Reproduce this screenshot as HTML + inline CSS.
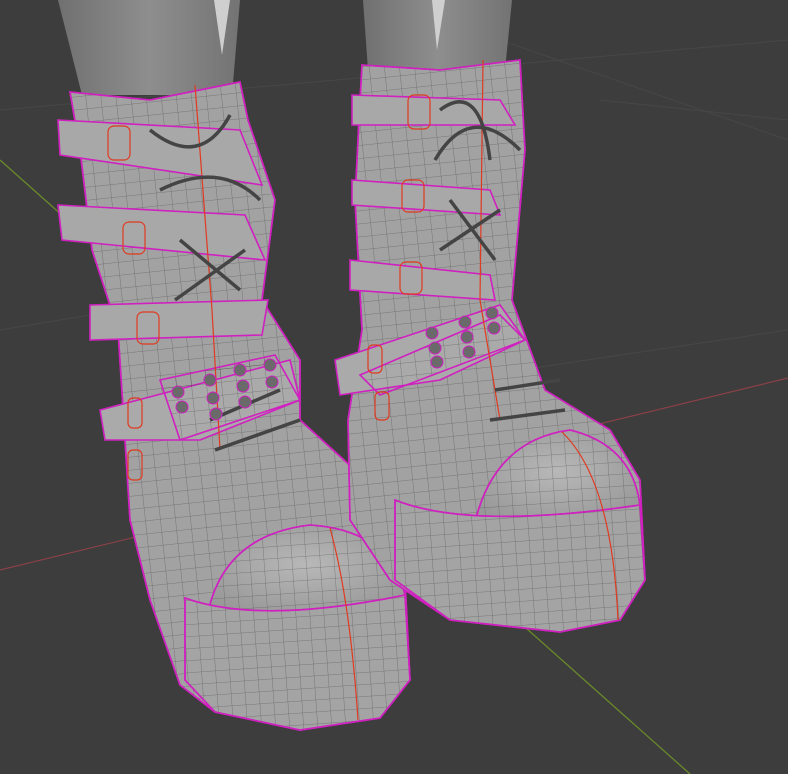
<!DOCTYPE html>
<html><head><meta charset="utf-8"><style>
html,body{margin:0;padding:0;background:#3d3d3d;width:788px;height:774px;overflow:hidden}
svg{display:block}
</style></head><body>
<svg width="788" height="774" viewBox="0 0 788 774" xmlns="http://www.w3.org/2000/svg">
<defs>
<pattern id="mesh" width="15" height="13" patternUnits="userSpaceOnUse" patternTransform="rotate(-6)">
<path d="M0 0H15M0 0V13" stroke="#3a3a3a" stroke-width="0.8" fill="none" opacity="0.55"/>
</pattern>
<pattern id="meshf" width="14" height="12" patternUnits="userSpaceOnUse" patternTransform="rotate(-4)">
<path d="M0 0H14M0 0V12" stroke="#3a3a3a" stroke-width="0.8" fill="none" opacity="0.55"/>
</pattern>
<radialGradient id="toe" cx="0.5" cy="0.45" r="0.6"><stop offset="0" stop-color="#b8b8b8"/><stop offset="1" stop-color="#999"/></radialGradient>
<linearGradient id="leg" x1="0" x2="1"><stop offset="0" stop-color="#707070"/><stop offset="0.5" stop-color="#8e8e8e"/><stop offset="1" stop-color="#737373"/></linearGradient>
</defs>
<rect width="788" height="774" fill="#3d3d3d"/>
<g stroke="#474747" stroke-width="1" fill="none">
<path d="M0 110L560 60L788 40"/><path d="M500 40L788 140"/><path d="M600 100L788 120"/><path d="M0 330L120 310"/><path d="M520 370L788 330"/>
</g>
<path d="M0 160L690 774" stroke="#6a8a2a" stroke-width="1.3"/>
<path d="M0 570L788 378" stroke="#8a4048" stroke-width="1.2"/>
<path d="M58 0H240L232 95H82Z" fill="url(#leg)"/>
<path d="M214 0L222 55L230 0Z" fill="#cfcfcf"/>
<path d="M363 0H512L505 70H368Z" fill="url(#leg)"/>
<path d="M432 0L437 50L445 0Z" fill="#cfcfcf"/>
<!-- LEFT BOOT -->
<g stroke="#d020c0" stroke-width="1.6">
<path d="M70 92L150 100L240 82L248 120L275 200L262 300L300 360L300 420L355 470L395 540L405 580L410 680L380 718L300 730L215 712L180 685L150 600L130 520L125 440L118 330L92 250L80 150Z" fill="#a2a2a2"/>
<path d="M70 92L150 100L240 82L248 120L275 200L262 300L300 360L300 420L355 470L395 540L405 580L410 680L380 718L300 730L215 712L180 685L150 600L130 520L125 440L118 330L92 250L80 150Z" fill="url(#mesh)"/>
<path d="M208 612Q225 535 310 525Q390 530 405 595Q330 620 208 612Z" fill="url(#toe)"/>
<path d="M208 612Q225 535 310 525Q390 530 405 595Q330 620 208 612Z" fill="url(#meshf)"/>
<path d="M185 598Q260 625 405 595L410 680L380 718L300 730L215 712L185 680Z" fill="#a4a4a4"/>
<path d="M185 598Q260 625 405 595L410 680L380 718L300 730L215 712L185 680Z" fill="url(#meshf)"/>
<path d="M58 120L240 130L262 185L60 155Z" fill="#a8a8a8"/>
<path d="M58 205L245 215L265 260L62 240Z" fill="#a8a8a8"/>
<path d="M90 305L268 300L262 335L90 340Z" fill="#a8a8a8"/>
<path d="M100 410L290 360L300 400L200 440L105 440Z" fill="#aaa"/>
<path d="M160 380L275 355L300 400L180 440Z" fill="url(#mesh)"/>
</g>
<g stroke="#e03a20" stroke-width="1.2" fill="none">
<path d="M195 85L212 310L220 450"/><path d="M330 528Q350 600 358 720"/>
<rect x="108" y="126" width="22" height="34" rx="6"/><rect x="123" y="222" width="22" height="32" rx="6"/><rect x="137" y="312" width="22" height="32" rx="6"/>
<rect x="128" y="398" width="14" height="30" rx="5"/><rect x="128" y="450" width="14" height="30" rx="5"/>
</g>
<g stroke="#444" stroke-width="3.5" fill="none">
<path d="M150 130Q200 170 230 115M160 190Q220 160 260 200M180 240L240 290M175 300L245 250M215 450L300 420M210 420L280 390"/>
</g>
<g fill="#6a6a6a" stroke="#d020c0">
<circle cx="210" cy="380" r="6"/><circle cx="240" cy="370" r="6"/><circle cx="213" cy="398" r="6"/><circle cx="243" cy="386" r="6"/><circle cx="216" cy="414" r="6"/><circle cx="245" cy="402" r="6"/><circle cx="178" cy="392" r="6"/><circle cx="182" cy="407" r="6"/><circle cx="270" cy="365" r="6"/><circle cx="272" cy="382" r="6"/>
</g>
<!-- RIGHT BOOT -->
<g stroke="#d020c0" stroke-width="1.6">
<path d="M362 65L440 70L520 60L525 150L512 300L545 390L610 430L640 480L645 580L620 620L560 632L450 620L390 580L350 520L348 420L362 330L355 200L360 100Z" fill="#a2a2a2"/>
<path d="M362 65L440 70L520 60L525 150L512 300L545 390L610 430L640 480L645 580L620 620L560 632L450 620L390 580L350 520L348 420L362 330L355 200L360 100Z" fill="url(#mesh)"/>
<path d="M475 522Q495 440 570 430Q632 445 640 505Q560 528 475 522Z" fill="url(#toe)"/>
<path d="M475 522Q495 440 570 430Q632 445 640 505Q560 528 475 522Z" fill="url(#meshf)"/>
<path d="M395 500Q470 530 640 505L645 580L620 620L560 632L450 620L395 580Z" fill="#a4a4a4"/>
<path d="M395 500Q470 530 640 505L645 580L620 620L560 632L450 620L395 580Z" fill="url(#meshf)"/>
<path d="M352 95L500 100L515 125L352 125Z" fill="#a8a8a8"/>
<path d="M352 180L490 190L500 215L352 205Z" fill="#a8a8a8"/>
<path d="M350 260L490 275L495 300L350 290Z" fill="#a8a8a8"/>
<path d="M335 360L500 305L525 340L440 380L340 395Z" fill="#aaa"/>
<path d="M360 375L500 315L525 340L380 395Z" fill="url(#mesh)"/>
</g>
<g stroke="#e03a20" stroke-width="1.2" fill="none">
<path d="M483 60L480 300L500 420"/><path d="M562 432Q612 480 618 620"/>
<rect x="408" y="95" width="22" height="34" rx="6"/><rect x="402" y="180" width="22" height="32" rx="6"/><rect x="400" y="262" width="22" height="32" rx="6"/>
<rect x="368" y="345" width="14" height="28" rx="5"/><rect x="375" y="392" width="14" height="28" rx="5"/>
</g>
<g stroke="#444" stroke-width="3.5" fill="none">
<path d="M435 160Q470 100 520 150M440 110Q480 80 490 160M440 250L500 210M450 200L495 260M490 420L565 410M495 390L560 380"/>
</g>
<g fill="#6a6a6a" stroke="#d020c0">
<circle cx="432" cy="333" r="6"/><circle cx="435" cy="348" r="6"/><circle cx="437" cy="362" r="6"/><circle cx="465" cy="322" r="6"/><circle cx="467" cy="337" r="6"/><circle cx="469" cy="352" r="6"/><circle cx="492" cy="313" r="6"/><circle cx="494" cy="328" r="6"/>
</g>
</svg>
</body></html>
